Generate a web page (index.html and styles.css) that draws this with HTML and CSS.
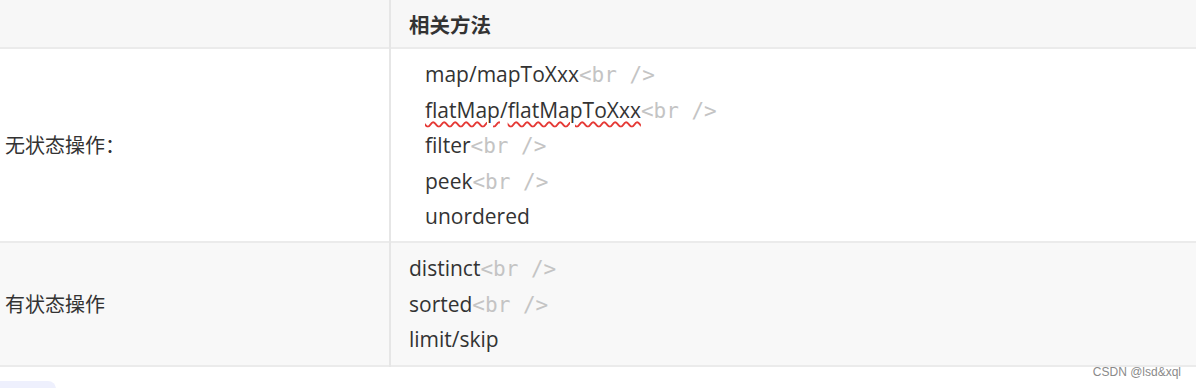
FILE: index.html
```html
<!DOCTYPE html>
<html lang="zh">
<head>
<meta charset="utf-8">
<link rel="stylesheet" href="styles.css">
</head>
<body>
<div class="page">
  <table class="tbl">
    <thead>
      <tr>
        <th class="c1"></th>
        <th class="c2">相关方法</th>
      </tr>
    </thead>
    <tbody>
      <tr class="r1">
        <td class="c1">无状态操作：</td>
        <td class="c2 ind">
          <div class="ln">map/mapToXxx<span class="tag">&lt;br /&gt;</span></div>
          <div class="ln"><span class="sp">flatMap</span>/<span class="sp">flatMapToXxx</span><span class="tag">&lt;br /&gt;</span></div>
          <div class="ln">filter<span class="tag">&lt;br /&gt;</span></div>
          <div class="ln">peek<span class="tag">&lt;br /&gt;</span></div>
          <div class="ln">unordered</div>
        </td>
      </tr>
      <tr class="r2">
        <td class="c1">有状态操作</td>
        <td class="c2">
          <div class="ln">distinct<span class="tag">&lt;br /&gt;</span></div>
          <div class="ln">sorted<span class="tag">&lt;br /&gt;</span></div>
          <div class="ln">limit/skip</div>
        </td>
      </tr>
    </tbody>
  </table>
  <div class="foot">
    <div class="blob"></div>
    <div class="wm">CSDN @lsd&amp;xql</div>
  </div>
</div>
</body>
</html>
```

FILE: styles.css
```css
html, body {
  margin: 0;
  padding: 0;
  background: #ffffff;
}
.page {
  width: 1196px;
  height: 388px;
  overflow: hidden;
  position: relative;
  font-family: "Open Sans", "Noto Sans CJK SC", sans-serif;
  color: #333333;
}
.tbl {
  width: 1196px;
  border-collapse: collapse;
  table-layout: fixed;
}
.tbl th, .tbl td {
  padding: 0;
  vertical-align: middle;
  text-align: left;
}
.tbl th.c1, .tbl td.c1 { width: 389px; }
.tbl th.c2, .tbl td.c2 { border-left: 2px solid #e6e6e6; }
thead tr {
  background: #f7f7f7;
  height: 48px;
  border-bottom: 2px solid #ebebeb;
}
thead th.c2 {
  font-family: "Noto Sans CJK SC", sans-serif;
  font-weight: 700;
  font-size: 20.5px;
  line-height: 28px;
  padding-left: 18px;
  color: #333;
}
tbody td.c1 {
  font-family: "Noto Sans CJK SC", sans-serif;
  font-size: 20px;
  line-height: 28px;
  padding-left: 5px;
  color: #333;
}
tbody td.c2 {
  padding: 8px 0 6.5px 18px;
  font-size: 21px;
}
tbody td.ind { padding-left: 34px; }
.r1 { border-bottom: 2px solid #ebebeb; }
.r2 { background: #f8f8f8; border-bottom: 2px solid #ebebeb; }
.r2 td.c2 { padding-top: 8px; padding-bottom: 7.5px; }
.ln {
  height: 35.5px;
  line-height: 35.5px;
  white-space: pre;
}
.tag {
  font-family: "DejaVu Sans Mono", monospace;
  font-size: 21px;
  line-height: 1;
  color: #c4c4c4;
  white-space: pre;
}
.sp {
  text-decoration: underline wavy #e53935;
  text-decoration-thickness: 1.5px;
  text-underline-offset: 3px;
}
.foot {
  position: relative;
  height: 20px;
}
.blob {
  position: absolute;
  left: -10px;
  top: 14px;
  width: 66px;
  height: 20px;
  border-radius: 8px;
  background: #eef0fd;
}
.wm {
  position: absolute;
  right: 15px;
  top: -2px;
  font-family: "Liberation Sans", Arial, sans-serif;
  font-size: 12px;
  color: #8a8a8a;
}
```
